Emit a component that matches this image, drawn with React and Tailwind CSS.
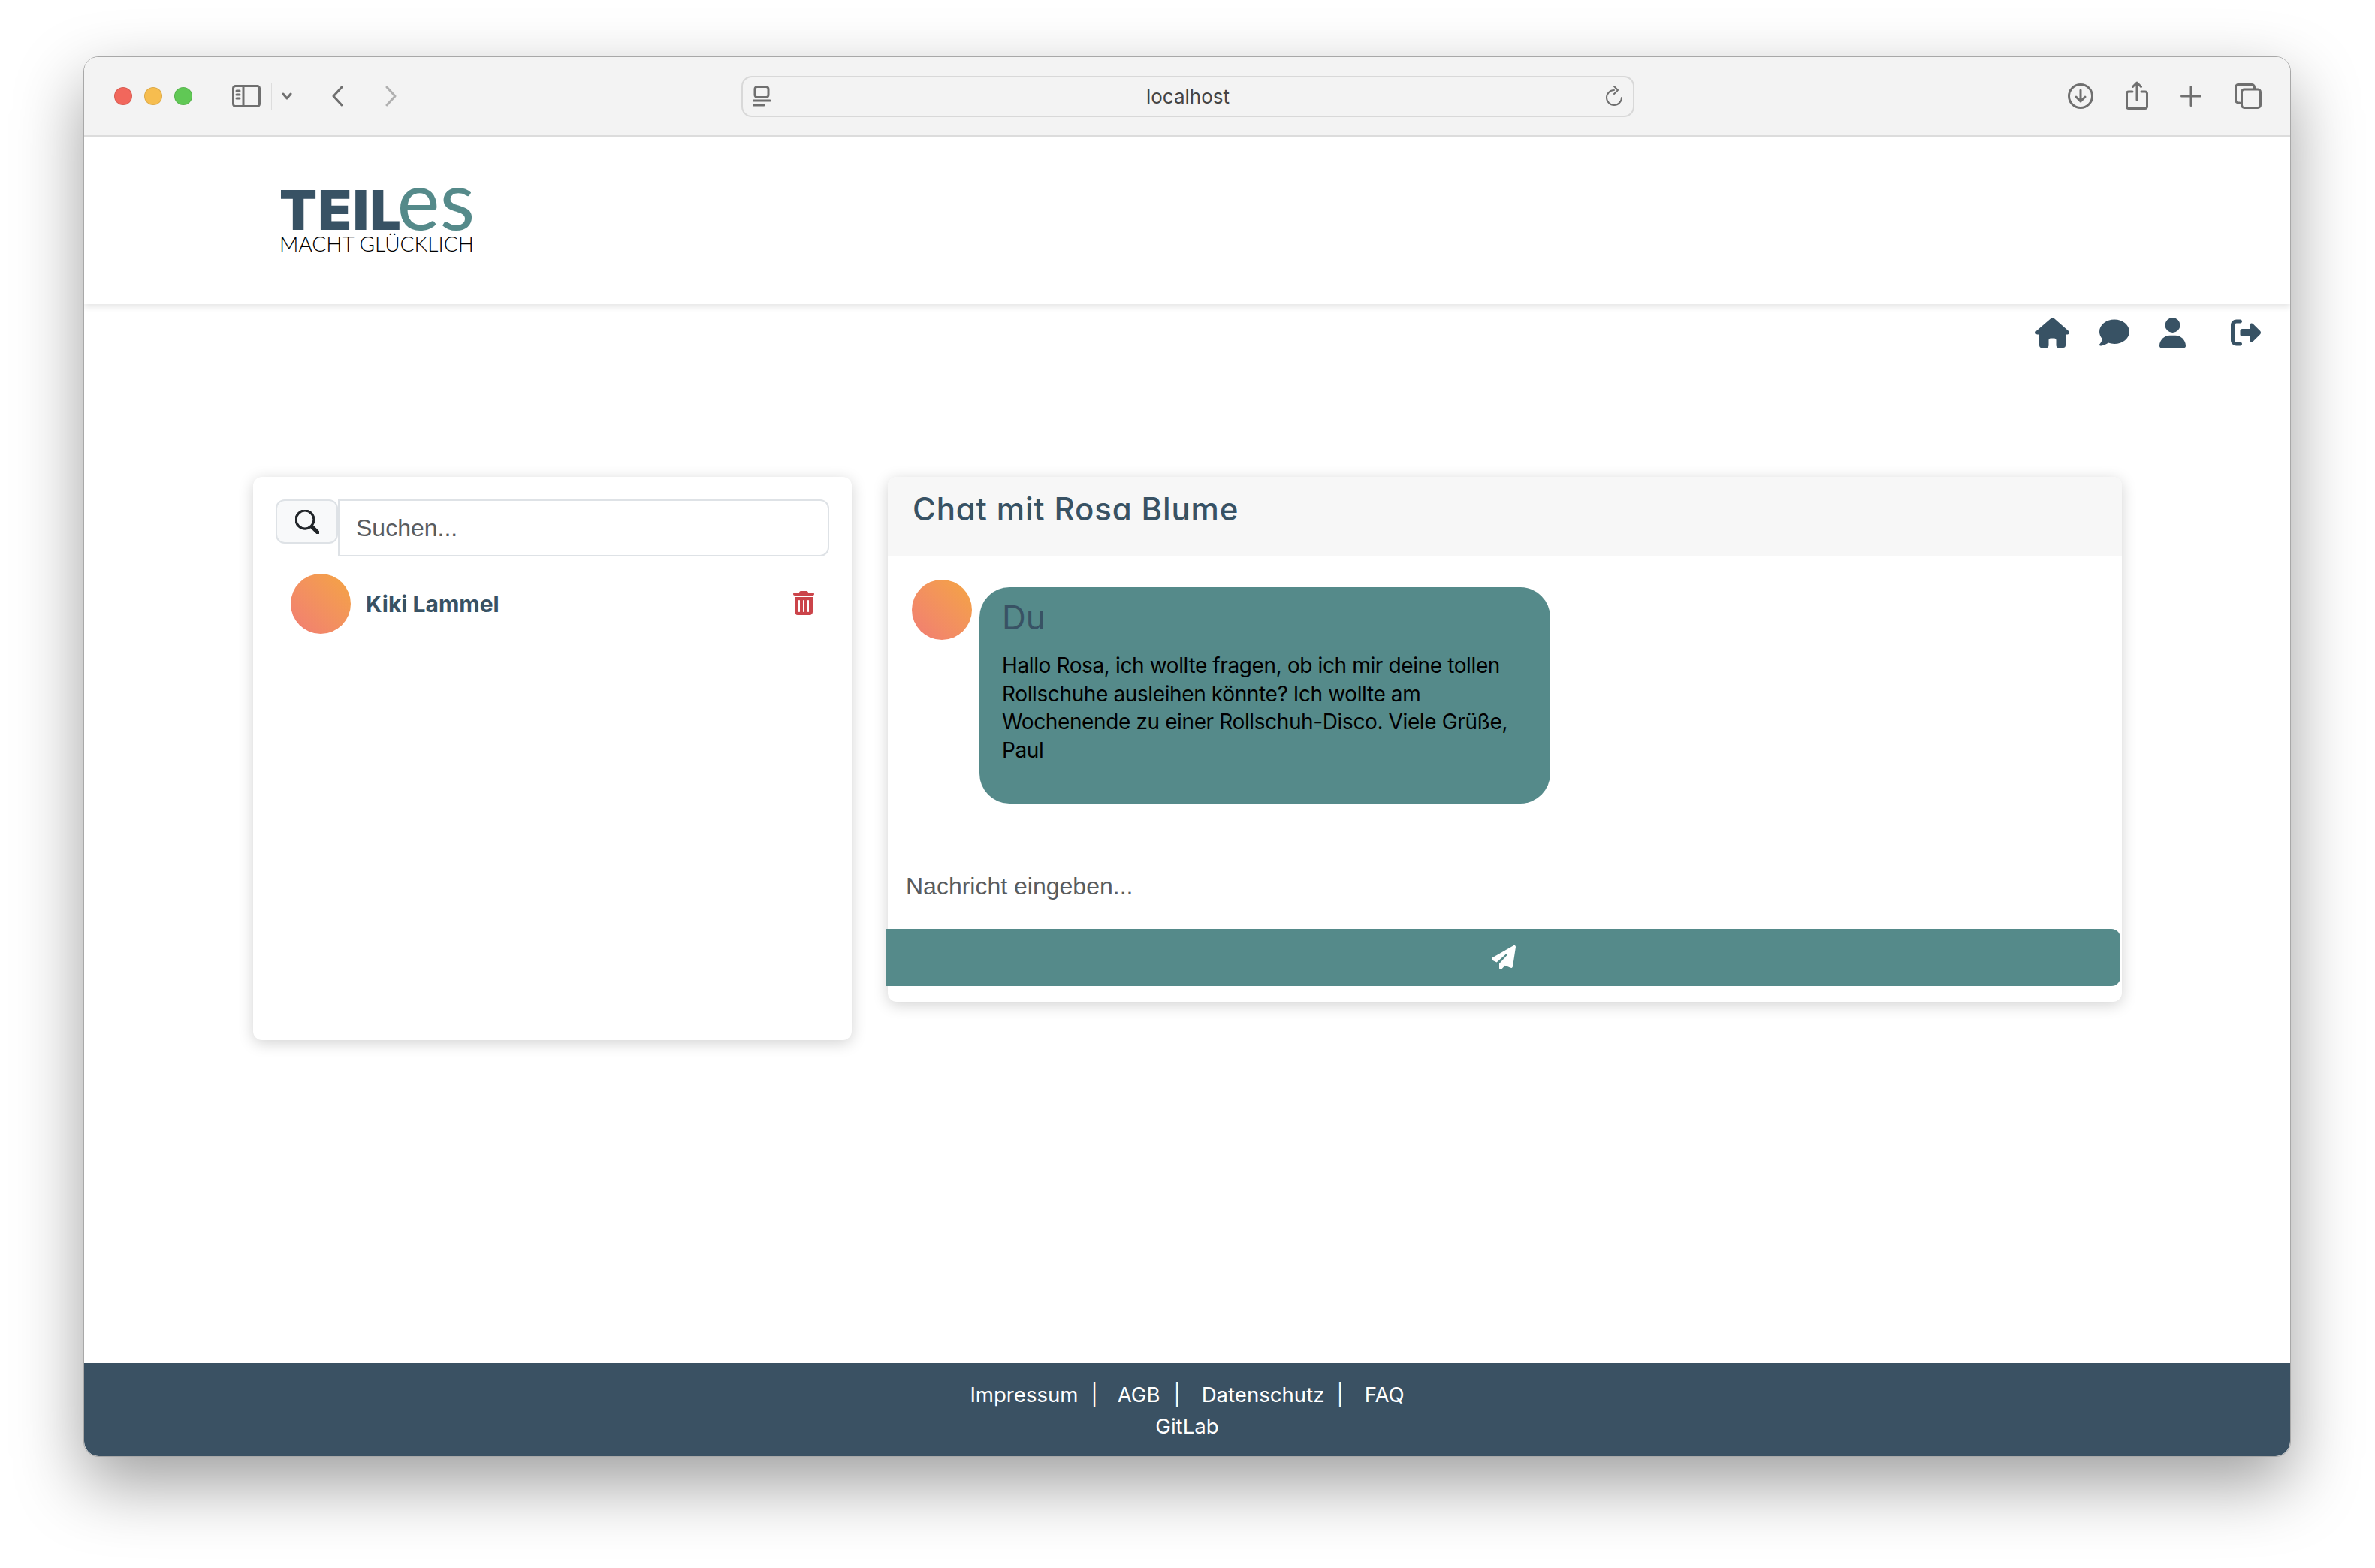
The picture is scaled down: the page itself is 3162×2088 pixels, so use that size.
import { FaHouse, FaComment, FaUser, FaRightFromBracket, FaPaperPlane, FaTrashCan } from 'react-icons/fa6';
import { BsSearch } from 'react-icons/bs';

const Dot = ({ className }) => <span className={`h-[24px] w-[24px] rounded-full border border-black/10 ${className}`} />;

const SafariIcon = ({ w, h, vb, className = '', children }) => (
  <svg width={w} height={h} viewBox={vb} fill="none" stroke="#6f6f6f" strokeWidth="3" strokeLinecap="round" strokeLinejoin="round" className={className}>
    {children}
  </svg>
);

const Toolbar = () => (
  <div className="relative flex h-[106px] shrink-0 items-center border-b-2 border-[#dcdcdc] bg-[#f3f3f3] pl-[40px] pr-[38px]">
    <div className="flex items-center gap-[16px]">
      <Dot className="bg-[#f1675c]" />
      <Dot className="bg-[#f6bd4f]" />
      <Dot className="bg-[#60c855]" />
    </div>
    <SafariIcon w={38} h={30} vb="0 0 38 30" className="ml-[53px]">
      <rect x="1.5" y="1.5" width="35" height="27" rx="3" />
      <path d="M15 2v26M6 8h4M6 13h4M6 18h4" />
    </SafariIcon>
    <span className="ml-[14px] h-[36px] w-px bg-[#dddddd]" />
    <SafariIcon w={14} h={10} vb="0 0 14 10" className="ml-[13px]">
      <path d="M2 2l5 6 5-6" />
    </SafariIcon>
    <SafariIcon w={16} h={28} vb="0 0 16 28" className="ml-[52px]">
      <path d="M14 2L3 14l11 12" />
    </SafariIcon>
    <SafariIcon w={16} h={28} vb="0 0 16 28" className="ml-[56px] opacity-50">
      <path d="M2 2l11 12L2 26" />
    </SafariIcon>
    <div className="ml-[458px] flex h-[55px] w-[1189px] items-center justify-between rounded-[14px] border-2 border-[#d8d8d8] px-[13px]">
      <SafariIcon w={24} h={28} vb="0 0 24 28">
        <rect x="3" y="1.5" width="18" height="14" rx="3" />
        <path d="M1 20h22M1 26h14" />
      </SafariIcon>
      <span className="font-['Inter',sans-serif] text-[26px] text-[#444444]">localhost</span>
      <SafariIcon w={24} h={28} vb="0 0 24 28">
        <path d="M12 6a10 10 0 1 0 10 10M12 1l5 5-5 5" strokeWidth="2" />
      </SafariIcon>
    </div>
    <div className="ml-auto flex items-center">
      <SafariIcon w={34} h={34} vb="0 0 34 34">
        <circle cx="17" cy="17" r="15.5" />
        <path d="M17 9v15M11 18l6 6 6-6" />
      </SafariIcon>
      <SafariIcon w={30} h={38} vb="0 0 30 38" className="ml-[43px] mb-[2px]">
        <path d="M9 14H4a2.500 2.500 0 0 0-2.500 2.500V34A2.500 2.500 0 0 0 4 36.500h22a2.500 2.500 0 0 0 2.500-2.500V16.500A2.500 2.500 0 0 0 26 14h-5" />
        <path d="M15 25V2M9.500 7.500L15 2l5.500 5.500" />
      </SafariIcon>
      <SafariIcon w={28} h={28} vb="0 0 28 28" className="ml-[43px]">
        <path d="M14 1.500v25M1.500 14h25" />
      </SafariIcon>
      <SafariIcon w={36} h={34} vb="0 0 36 34" className="ml-[44px]">
        <path d="M7 26H5a3.500 3.500 0 0 1-3.500-3.500V5A3.500 3.500 0 0 1 5 1.500h18A3.500 3.500 0 0 1 26.500 5v2" />
        <rect x="9.500" y="8" width="25" height="24.500" rx="3.500" />
      </SafariIcon>
    </div>
  </div>
);

const Logo = () => (
  <div className="-ml-[2px] flex w-[258px] flex-col">
    <div className="-mt-[16px] flex h-[66px] items-baseline">
      <span className="font-['Inter',sans-serif] text-[73px] leading-[66px] font-black tracking-[1.5px] text-[#385264]">TEIL</span>
      <span className="-ml-[7px] font-['Lato',sans-serif] text-[108px] leading-[66px] font-normal text-[#558a8a]">es</span>
    </div>
    <span className="mt-[10px] font-['Lato',sans-serif] text-[28px] leading-[34px] font-light whitespace-nowrap text-black">MACHT GLÜCKLICH</span>
  </div>
);

const Header = () => (
  <div className="flex h-[223px] shrink-0 items-center bg-white pl-[262px] shadow-[0_4px_8px_rgba(0,0,0,0.1)]">
    <Logo />
  </div>
);

const Nav = () => (
  <div className="flex h-[58px] items-start justify-end pt-[18px] pr-[39px] text-[#385264]">
    <FaHouse className="h-[40px] w-[45px]" />
    <FaComment className="ml-[40px] h-[40px] w-[40px]" />
    <FaUser className="ml-[40px] h-[40px] w-[35px]" />
    <FaRightFromBracket className="ml-[60px] h-[40px] w-[40px]" />
  </div>
);

const Avatar = () => <div className="h-[80px] w-[80px] shrink-0 rounded-full bg-gradient-to-tr from-[#f17c73] to-[#f4a53f]" />;

const ContactList = () => (
  <div className="h-[750px] w-[797px] shrink-0 rounded-[12px] bg-white p-[30px] shadow-[0_4px_20px_rgba(0,0,0,0.18)]">
    <div className="flex items-start">
      <div className="flex h-[59px] w-[83px] items-center justify-center rounded-[12px] border-2 border-[#dee2e6] bg-[#f8f9fa] text-[#212529]">
        <BsSearch className="h-[32px] w-[32px]" stroke="currentColor" strokeWidth="0.6" />
      </div>
      <input
        placeholder="Suchen..."
        className="h-[76px] w-[654px] rounded-r-[12px] border-2 border-[#dee2e6] bg-white px-[22px] font-['Liberation_Sans',sans-serif] text-[32px] outline-none placeholder:text-[#595c5f]"
      />
    </div>
    <div className="mt-[23px] flex items-center pr-[20px] pl-[20px]">
      <Avatar />
      <span className="ml-[20px] font-['Inter',sans-serif] text-[30px] font-bold text-[#385264]">Kiki Lammel</span>
      <FaTrashCan className="mb-[2px] ml-auto h-[32px] w-[28px] text-[#cb444a]" />
    </div>
  </div>
);

const ChatPanel = () => (
  <div className="flex h-[699px] w-[1643px] shrink-0 flex-col rounded-[12px] bg-white shadow-[0_4px_20px_rgba(0,0,0,0.18)]">
    <div className="h-[105px] shrink-0 rounded-t-[12px] bg-[#f7f7f7] pt-[18px] pl-[33px]">
      <h2 className="font-['Inter',sans-serif] text-[42px] leading-[50px] font-medium tracking-[0.85px] text-[#385264] [font-feature-settings:'cv11']">Chat mit Rosa Blume</h2>
    </div>
    <div className="flex flex-1 items-start pt-[32px] pl-[32px]">
      <Avatar />
      <div className="mt-[10px] ml-[10px] h-[288px] w-[760px] rounded-[40px] bg-[#558a8a] px-[30px] pt-[15px]">
        <p className="font-['Inter',sans-serif] text-[44px] leading-[50px] font-normal text-[#385264] [font-feature-settings:'cv11']">Du</p>
        <p className="mt-[21px] font-['Inter',sans-serif] text-[28px] leading-[37.700px] tracking-[-0.38px] text-black">
          Hallo Rosa, ich wollte fragen, ob ich mir deine tollen Rollschuhe ausleihen könnte? Ich wollte am Wochenende zu einer Rollschuh-Disco. Viele Grüße, Paul
        </p>
      </div>
    </div>
    <input
      placeholder="Nachricht eingeben..."
      className="h-[76px] shrink-0 bg-transparent px-[24px] pb-[4px] font-['Liberation_Sans',sans-serif] text-[32px] outline-none placeholder:text-[#595c5f]"
    />
    <div className="mt-[17px] mr-[2px] mb-[21px] -ml-[2px] flex h-[76px] shrink-0 items-center justify-center rounded-r-[12px] bg-[#558a8a] text-white">
      <FaPaperPlane className="h-[32px] w-[32px]" />
    </div>
  </div>
);

const Footer = () => (
  <div className="flex h-[124px] shrink-0 flex-col items-center rounded-b-[20px] bg-[#3a5163] pt-[21px] font-['Inter',sans-serif] text-[27.600px] leading-[42px] text-white">
    <div className="flex">
      <span>Impressum</span>
      <span className="ml-[17px]">|</span>
      <span className="ml-[26px]">AGB</span>
      <span className="ml-[18px]">|</span>
      <span className="ml-[28px]">Datenschutz</span>
      <span className="ml-[16px]">|</span>
      <span className="ml-[28px]">FAQ</span>
    </div>
    <span>GitLab</span>
  </div>
);

const App = () => (
  <div className="h-[2088px] w-[3162px] overflow-hidden bg-white pt-[75px] pl-[111px]">
    <div className="flex h-[1865px] w-[2939px] flex-col overflow-hidden rounded-[20px] border border-[#a8a8a8] bg-white shadow-[0_36px_90px_rgba(0,0,0,0.38)]">
      <Toolbar />
      <Header />
      <Nav />
      <div className="flex flex-1 items-start gap-[48px] pt-[172px] pl-[225px]">
        <ContactList />
        <ChatPanel />
      </div>
      <Footer />
    </div>
  </div>
);

export default App;
